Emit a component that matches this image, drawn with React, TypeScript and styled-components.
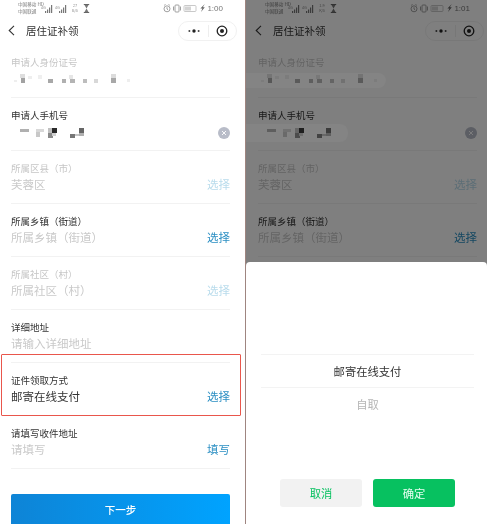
import React from "react";
import styled, { createGlobalStyle } from "styled-components";

const Global = createGlobalStyle`
  html, body { margin: 0; padding: 0; background: #fff; }
  body { font-family: "Noto Sans CJK SC", "Noto Sans", sans-serif; overflow: hidden; }
`;

const Page = styled.div`
  width: 487px;
  height: 524px;
  display: grid;
  grid-template-columns: 243px 242px;
  column-gap: 2px;
  overflow: hidden;
  background: #fff;
  filter: blur(0.5px);
`;

const Panel = styled.div<{ $inset?: boolean }>`
  position: relative;
  height: 524px;
  overflow: hidden;
  padding-left: ${(p) => (p.$inset ? "2px" : "0")};
  background: #fff;
`;

const Screen = styled.div`
  width: 243px;
  display: flex;
  flex-direction: column;
`;

const StatusBar = styled.div`
  height: 16px;
  padding: 0 20px 0 18px;
  display: flex;
  align-items: center;
  justify-content: space-between;
  color: #777;
`;

const StatusGroup = styled.div`
  display: flex;
  align-items: center;
  gap: 2px;
`;

const Carriers = styled.div`
  width: 21px;
  font-size: 4.6px;
  line-height: 7px;
  color: #777;
  white-space: nowrap;
`;

const Speed = styled.div`
  width: 10px;
  font-size: 3.8px;
  line-height: 5px;
  text-align: center;
  color: #888;
  margin: 0 1px;
`;

const Clock = styled.span`
  font-family: "Liberation Sans", Arial, sans-serif;
  font-size: 8px;
  color: #777;
`;

const NavBar = styled.div`
  height: 29px;
  padding: 0 6px 0 8px;
  display: flex;
  align-items: center;
`;

const Title = styled.div`
  margin-left: 11px;
  flex: 1;
  font-size: 10.5px;
  line-height: 14px;
  color: #333;
`;

const Capsule = styled.div`
  width: 59px;
  height: 20px;
  box-sizing: border-box;
  border: 1px solid #f1f1f1;
  border-radius: 10px;
  display: flex;
  align-items: center;
  padding: 0 8px 0 9px;
  justify-content: space-between;
  background: rgba(255, 255, 255, 0.7);
`;

const Sep = styled.div`
  width: 1px;
  height: 12px;
  background: #eee;
`;

const List = styled.div`
  padding: 0 13px 0 11px;
`;

const Row = styled.div`
  height: 53px;
  box-sizing: border-box;
  padding-top: 11px;
  border-bottom: 1px solid #f2f2f2;
`;

const Label = styled.div<{ $dim?: boolean }>`
  height: 12px;
  font-size: 9.5px;
  line-height: 12px;
  color: ${(p) => (p.$dim ? "#c6c6c6" : "#333")};
  white-space: nowrap;
`;

const Line = styled.div<{ $gap?: number }>`
  margin-top: ${(p) => p.$gap ?? 2}px;
  height: 16px;
  display: flex;
  align-items: center;
  justify-content: space-between;
`;

const Value = styled.span<{ $placeholder?: boolean }>`
  font-size: 11.5px;
  line-height: 16px;
  color: ${(p) => (p.$placeholder ? "#c9c9c9" : "#333")};
  white-space: nowrap;
`;

const Action = styled.span<{ $dim?: boolean }>`
  font-size: 11.5px;
  line-height: 16px;
  color: ${(p) => (p.$dim ? "#b9dcec" : "#2b8fc3")};
`;

const NextButton = styled.div`
  margin: 25px 13px 0 11px;
  height: 34px;
  padding-bottom: 4px;
  box-sizing: border-box;
  border-radius: 2px;
  background: linear-gradient(90deg, #0e84d6, #00a3ff);
  display: flex;
  align-items: center;
  justify-content: center;
  color: #fff;
  font-size: 10.5px;
  font-weight: 500;
`;

const Callout = styled.div`
  position: absolute;
  left: 1px;
  top: 354px;
  width: 240px;
  height: 62px;
  box-sizing: border-box;
  border: 1.5px solid #e9564c;
  border-radius: 1px;
`;

const Overlay = styled.div`
  position: absolute;
  inset: 0;
  background: rgba(0, 0, 0, 0.5);
  border-left: 1px solid rgba(255, 150, 130, 0.25);
  box-sizing: border-box;
`;

const Smudge = styled.div<{ $top: number; $width: number; $height: number }>`
  position: absolute;
  left: 0;
  top: ${(p) => p.$top}px;
  width: ${(p) => p.$width}px;
  height: ${(p) => p.$height}px;
  border-radius: 0 8px 8px 0;
  background: rgba(255, 255, 255, 0.04);
`;

const Sheet = styled.div`
  position: absolute;
  left: 0;
  right: 0;
  bottom: 0;
  height: 262px;
  box-sizing: border-box;
  padding: 92px 13px 0 15px;
  background: #fff;
  border-radius: 4px 4px 0 0;
  display: flex;
  flex-direction: column;
`;

const PickerItem = styled.div<{ $selected?: boolean }>`
  height: 33px;
  box-sizing: border-box;
  display: flex;
  align-items: center;
  justify-content: center;
  font-size: 11.3px;
  color: ${(p) => (p.$selected ? "#333" : "#b5b5b5")};
  border-top: 1px solid #f3f3f3;
`;

const SheetButtons = styled.div`
  margin-top: 59px;
  display: flex;
  justify-content: center;
  gap: 11px;
`;

const SheetButton = styled.div<{ $primary?: boolean }>`
  width: 82px;
  height: 28px;
  border-radius: 3px;
  display: flex;
  align-items: center;
  justify-content: center;
  font-size: 11.3px;
  background: ${(p) => (p.$primary ? "#07c160" : "#f2f2f2")};
  color: ${(p) => (p.$primary ? "#e8fff2" : "#07c160")};
`;

type Block = [number, number, number, number, string];

const idBlocks: Block[] = [
  [9, 2, 5, 4, "#dedede"], [10, 6, 4, 5, "#a2a2a2"], [3, 8, 3, 2, "#eee"], [17, 4, 4, 3, "#eee"],
  [27, 3, 4, 4, "#efefef"], [37, 7, 5, 4, "#a8a8a8"], [51, 7, 4, 4, "#b0b0b0"], [58, 3, 4, 4, "#e6e6e6"],
  [59, 7, 5, 4, "#b4b4b4"], [72, 7, 4, 4, "#bdbdbd"], [83, 7, 4, 4, "#d8d8d8"], [100, 2, 5, 4, "#dcdcdc"],
  [100, 6, 5, 5, "#a8a8a8"], [116, 7, 3, 3, "#eee"],
];

const phoneBlocks: Block[] = [
  [9, 4, 9, 3, "#b0b0b0"], [25, 4, 8, 3, "#d8d8d8"], [25, 7, 4, 5, "#c8c8c8"], [37, 3, 4, 5, "#c0c0c0"],
  [41, 3, 5, 5, "#2a2a2a"], [37, 8, 5, 5, "#8a8a8a"], [41, 8, 4, 3, "#d0d0d0"], [59, 9, 5, 4, "#777"],
  [64, 9, 4, 2, "#c4c4c4"], [68, 3, 5, 5, "#666"], [68, 8, 5, 3, "#b0b0b0"],
];

const Mosaic: React.FC<{ blocks: Block[] }> = ({ blocks }) => (
  <svg width="125" height="16" viewBox="0 0 125 16">
    {blocks.map(([x, y, w, h, c], i) => (
      <rect key={i} x={x} y={y} width={w} height={h} fill={c} />
    ))}
  </svg>
);

const Bars = () => (
  <svg width="12" height="9" viewBox="0 0 12 9">
    <text x="0" y="5" fontSize="3.6" fill="#888" fontFamily="Liberation Sans">4G</text>
    <path d="M4 9V7h1.2v2zM6 9V5.5h1.2V9zM8 9V3.5h1.2V9zM10 9V1h1.2v8z" fill="#777" />
  </svg>
);

const Hourglass = () => (
  <svg width="7" height="9" viewBox="0 0 7 9">
    <path d="M.8.5h5.4M.8 8.5h5.4" stroke="#666" strokeWidth="1" />
    <path d="M1.5 1h4L3.5 4.5 5.5 8h-4l2-3.5z" fill="#777" />
  </svg>
);

const StatusIcons = () => (
  <svg width="35" height="9" viewBox="0 0 35 9" fill="none" stroke="#888" strokeWidth=".8">
    <circle cx="4" cy="4.8" r="3" />
    <path d="M4 3.2v1.8l1 .8M1.2 1.3l1.3-.8M6.8 1.3l-1.3-.8" />
    <rect x="12" y="1" width="4" height="7" rx=".8" />
    <path d="M10.5 2.5v4M17.5 2.5v4" />
    <rect x="21" y="1.5" width="12" height="6" rx="1" stroke="#bbb" />
    <rect x="22" y="2.5" width="6" height="4" fill="#d4d4d4" stroke="none" />
  </svg>
);

const Bolt = () => (
  <svg width="5" height="8" viewBox="0 0 5 8">
    <path d="M4.8 0L.4 4.6h2L1 8l3.8-4.8h-2z" fill="#666" />
  </svg>
);

const Back = () => (
  <svg width="7" height="11" viewBox="0 0 7 11" fill="none">
    <path d="M6 .8L1.2 5.5 6 10.2" stroke="#333" strokeWidth="1.1" />
  </svg>
);

const Dots = () => (
  <svg width="12" height="4" viewBox="0 0 12 4">
    <circle cx="1.4" cy="2" r="1" fill="#444" />
    <circle cx="6" cy="2" r="1.7" fill="#222" />
    <circle cx="10.6" cy="2" r="1" fill="#444" />
  </svg>
);

const Target = () => (
  <svg width="12" height="12" viewBox="0 0 12 12" fill="none">
    <circle cx="6" cy="6" r="4.8" stroke="#222" strokeWidth="1.3" />
    <circle cx="6" cy="6" r="2" fill="#222" />
  </svg>
);

const Clear = () => (
  <svg width="12" height="12" viewBox="0 0 12 12" fill="none">
    <circle cx="6" cy="6" r="6" fill="#b8bcc8" />
    <path d="M4 4l4 4M8 4l-4 4" stroke="#fff" strokeWidth=".9" />
  </svg>
);

const Phone: React.FC<{ time: string; speed: string; unit: string }> = ({ time, speed, unit }) => (
  <Screen>
    <StatusBar>
      <StatusGroup>
        <Carriers>
          中国移动 HD
          <br />
          中国联通
        </Carriers>
        <Bars />
        <Bars />
        <Speed>
          {speed}
          <br />
          {unit}
        </Speed>
        <Hourglass />
      </StatusGroup>
      <StatusGroup>
        <StatusIcons />
        <Bolt />
        <Clock>{time}</Clock>
      </StatusGroup>
    </StatusBar>
    <NavBar>
      <Back />
      <Title>居住证补领</Title>
      <Capsule>
        <Dots />
        <Sep />
        <Target />
      </Capsule>
    </NavBar>
    <List>
      <Row>
        <Label $dim>申请人身份证号</Label>
        <Line $gap={4}>
          <Mosaic blocks={idBlocks} />
        </Line>
      </Row>
      <Row>
        <Label>申请人手机号</Label>
        <Line $gap={4}>
          <Mosaic blocks={phoneBlocks} />
          <Clear />
        </Line>
      </Row>
      <Row>
        <Label $dim>所属区县（市）</Label>
        <Line>
          <Value $placeholder>芙蓉区</Value>
          <Action $dim>选择</Action>
        </Line>
      </Row>
      <Row>
        <Label>所属乡镇（街道）</Label>
        <Line>
          <Value $placeholder>所属乡镇（街道）</Value>
          <Action>选择</Action>
        </Line>
      </Row>
      <Row>
        <Label $dim>所属社区（村）</Label>
        <Line>
          <Value $placeholder>所属社区（村）</Value>
          <Action $dim>选择</Action>
        </Line>
      </Row>
      <Row>
        <Label>详细地址</Label>
        <Line>
          <Value $placeholder>请输入详细地址</Value>
        </Line>
      </Row>
      <Row>
        <Label>证件领取方式</Label>
        <Line>
          <Value>邮寄在线支付</Value>
          <Action>选择</Action>
        </Line>
      </Row>
      <Row>
        <Label>请填写收件地址</Label>
        <Line>
          <Value $placeholder>请填写</Value>
          <Action>填写</Action>
        </Line>
      </Row>
    </List>
    <NextButton>下一步</NextButton>
  </Screen>
);

export default function App() {
  return (
    <>
      <Global />
      <Page>
        <Panel>
          <Phone time="1:00" speed="27" unit="B/s" />
          <Callout />
        </Panel>
        <Panel $inset>
          <Phone time="1:01" speed="1.9" unit="K/s" />
          <Overlay>
            <Smudge $top={73} $width={140} $height={15} />
            <Smudge $top={124} $width={102} $height={18} />
            <Sheet>
              <PickerItem $selected>邮寄在线支付</PickerItem>
              <PickerItem>自取</PickerItem>
              <SheetButtons>
                <SheetButton>取消</SheetButton>
                <SheetButton $primary>确定</SheetButton>
              </SheetButtons>
            </Sheet>
          </Overlay>
        </Panel>
      </Page>
    </>
  );
}
